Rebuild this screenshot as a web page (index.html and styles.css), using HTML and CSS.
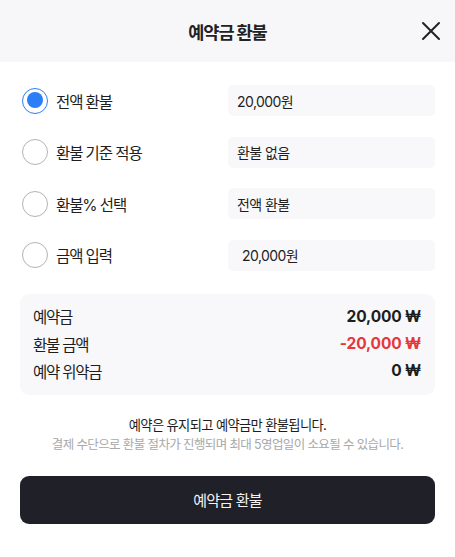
FILE: index.html
```html
<!DOCTYPE html>
<html lang="ko">
<head>
    <meta charset="UTF-8">
    <meta name="viewport" content="width=device-width, initial-scale=1.0">
    <title>예약금 환불</title>
    <link rel="stylesheet" href="styles.css">
</head>
<body>
    <div class="sheet">
        <!-- 헤더 -->
        <div class="header">
            <h1>예약금 환불</h1>
            <button type="button" class="close" aria-label="닫기">
                <svg width="20" height="20" viewBox="0 0 20 20">
                    <path d="M2 2 L18 18 M18 2 L2 18" stroke="#222" stroke-width="2" stroke-linecap="round" fill="none"/>
                </svg>
            </button>
        </div>

        <!-- 환불 방식 -->
        <div class="options">
            <label class="option">
                <input type="radio" name="refundType" value="all" checked>
                <span class="radio"></span>
                <span class="option-label">전액 환불</span>
                <span class="field">20,000원</span>
            </label>
            <label class="option">
                <input type="radio" name="refundType" value="policy">
                <span class="radio"></span>
                <span class="option-label">환불 기준 적용</span>
                <span class="field">환불 없음</span>
            </label>
            <label class="option">
                <input type="radio" name="refundType" value="percent">
                <span class="radio"></span>
                <span class="option-label">환불% 선택</span>
                <span class="field">전액 환불</span>
            </label>
            <label class="option">
                <input type="radio" name="refundType" value="amount">
                <span class="radio"></span>
                <span class="option-label">금액 입력</span>
                <span class="field field-input">20,000원</span>
            </label>
        </div>

        <!-- 금액 요약 -->
        <div class="summary">
            <div class="summary-row">
                <span>예약금</span>
                <span class="amount">20,000 ₩</span>
            </div>
            <div class="summary-row">
                <span>환불 금액</span>
                <span class="amount minus">-20,000 ₩</span>
            </div>
            <div class="summary-row">
                <span>예약 위약금</span>
                <span class="amount">0 ₩</span>
            </div>
        </div>

        <div class="notice">
            <p class="notice-main">예약은 유지되고 예약금만 환불됩니다.</p>
            <p class="notice-sub">결제 수단으로 환불 절차가 진행되며 최대 5영업일이 소요될 수 있습니다.</p>
        </div>

        <button type="submit" class="submit">예약금 환불</button>
    </div>
</body>
</html>
```

FILE: styles.css
```css
* {
    box-sizing: border-box;
}
body {
    margin: 0;
    font-family: "Inter", "Noto Sans CJK KR", sans-serif;
    color: #222;
    background: #fff;
}
.sheet {
    width: 455px;
}
.header {
    height: 62px;
    background: #f7f7f9;
    display: flex;
    align-items: center;
    justify-content: center;
    position: relative;
}
.header h1 {
    margin: 0;
    font-size: 17.5px;
    font-weight: 700;
    letter-spacing: -0.06em;
    color: #222;
}
.close {
    position: absolute;
    right: 14px;
    top: 21px;
    width: 20px;
    height: 20px;
    padding: 0;
    border: none;
    background: none;
    cursor: pointer;
}
.close svg {
    display: block;
}
.options {
    display: flex;
    flex-direction: column;
    gap: 20.5px;
    padding: 23px 20px 0 22px;
}
.option {
    display: flex;
    align-items: center;
    height: 31px;
    cursor: pointer;
}
.option input {
    display: none;
}
.radio {
    width: 26px;
    height: 26px;
    border-radius: 50%;
    border: 1.5px solid #b3b3b3;
    flex-shrink: 0;
    position: relative;
}
.option input:checked + .radio {
    border-color: #2b7ef8;
}
.option input:checked + .radio::after {
    content: "";
    position: absolute;
    left: 3.5px;
    top: 3.5px;
    width: 16px;
    height: 16px;
    border-radius: 50%;
    background: #2b7ef8;
}
.option-label {
    margin-left: 8px;
    font-size: 15.5px;
    letter-spacing: -0.07em;
    color: #1e1e1e;
    flex: 1;
}
.field {
    width: 207px;
    height: 31px;
    background: #f8f8fa;
    border-radius: 5px;
    padding-left: 9px;
    display: flex;
    align-items: center;
    font-size: 14px;
    letter-spacing: -0.04em;
    color: #1e1e1e;
}
.field-input {
    padding-left: 14px;
}
.summary {
    margin: 23px 20px 0;
    background: #f8f8fa;
    border-radius: 9px;
    padding: 9px 14px 10px 13px;
}
.summary-row {
    display: flex;
    justify-content: space-between;
    align-items: center;
    height: 27.4px;
    font-size: 15.5px;
    letter-spacing: -0.08em;
    color: #1e1e1e;
}
.amount {
    font-weight: 700;
    letter-spacing: -0.01em;
    font-size: 15.5px;
}
.amount.minus {
    color: #e5383b;
}
.notice {
    margin-top: 20px;
    text-align: center;
}
.notice p {
    margin: 0;
    line-height: 20px;
    letter-spacing: -0.05em;
}
.notice-main {
    font-size: 13.3px;
    color: #1e1e1e;
}
.notice-sub {
    font-size: 12.5px;
    color: #a8a8a8;
}
.submit {
    display: block;
    width: 415px;
    height: 48px;
    margin: 21px 20px 0;
    border: none;
    border-radius: 9px;
    background: #1f2028;
    color: #f2f2f2;
    font-family: inherit;
    font-size: 15px;
    letter-spacing: -0.05em;
    cursor: pointer;
}
```
